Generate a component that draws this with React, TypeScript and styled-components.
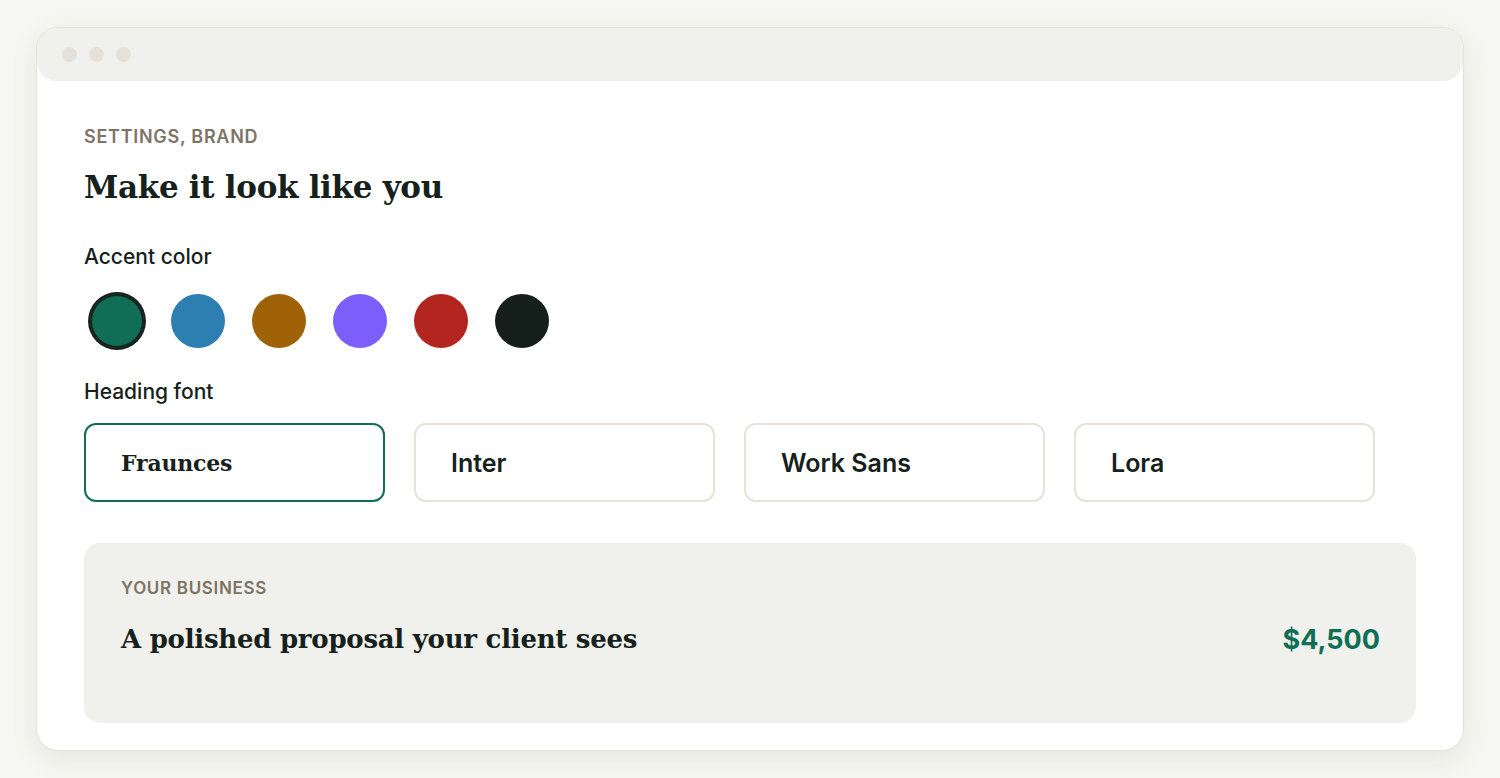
import React, { useState } from 'react';
import styled, { createGlobalStyle } from 'styled-components';

const GlobalStyle = createGlobalStyle`
    html, body {
        margin: 0;
        padding: 0;
        background: #f6f6f2;
        font-family: Inter, "Noto Sans", sans-serif;
        color: #16211c;
    }
`;

const Page = styled.div`
    padding: 27px 36px 27px;
`;

const Window = styled.div`
    background: #fff;
    border: 1px solid #e4e1d7;
    border-radius: 22px;
    box-shadow: 0 8px 28px rgba(60, 60, 40, .08);
    overflow: hidden;
`;

// title bar with the three window dots
const TitleBar = styled.div`
    height: 53px;
    background: #f0f1ec;
    border-radius: 0 0 20px 20px;
    display: flex;
    align-items: center;
    gap: 12px;
    padding-left: 25px;
`;

const Dot = styled.span`
    width: 15px;
    height: 15px;
    border-radius: 50%;
    background: #e6e1d8;
`;

const Content = styled.div`
    padding: 45px 47px 27px;
`;

const Eyebrow = styled.div<{ $size?: number }>`
    font-size: ${p => p.$size || 18}px;
    font-weight: 600;
    letter-spacing: .04em;
    color: #7d7466;
    text-transform: uppercase;
    line-height: 22px;
`;

const Heading = styled.h1`
    margin: 19px 0 0;
    font-family: "DejaVu Serif", "Liberation Serif", serif;
    font-weight: 700;
    font-size: 31px;
    line-height: 40px;
    letter-spacing: -.01em;
`;

const Label = styled.div`
    font-size: 21px;
    font-weight: 500;
    line-height: 24px;
    margin-top: 38px;
`;

const Swatches = styled.div`
    display: flex;
    gap: 27px;
    margin-top: 25px;
    padding-left: 6px;
`;

const Swatch = styled.button<{ $color: string, $selected: boolean }>`
    width: 54px;
    height: 54px;
    border-radius: 50%;
    border: none;
    padding: 0;
    background: ${p => p.$color};
    cursor: pointer;
    box-shadow: ${p => p.$selected ? '0 0 0 2px #16211c, inset 0 0 0 2px #16211c' : 'none'};
`;

const FontLabel = styled(Label)`
    margin-top: 32px;
`;

const FontGrid = styled.div`
    display: grid;
    grid-template-columns: repeat(4, 301px);
    gap: 29px;
    margin-top: 19px;
`;

const FontCard = styled.button<{ $selected: boolean, $serif?: boolean }>`
    height: 79px;
    border-radius: 12px;
    border: 2px solid ${p => p.$selected ? '#0f6e55' : '#e6e3d8'};
    background: #fff;
    text-align: left;
    padding: 0 0 0 35px;
    color: #16211c;
    cursor: pointer;
    font-family: ${p => p.$serif ? '"DejaVu Serif", "Liberation Serif", serif' : 'Inter, sans-serif'};
    font-weight: ${p => p.$serif ? 700 : 600};
    font-size: ${p => p.$serif ? 22 : 25}px;
    letter-spacing: ${p => p.$serif ? '-.01em' : '0'};
`;

const Preview = styled.div`
    margin-top: 41px;
    background: #f0f1ec;
    border-radius: 16px;
    height: 180px;
    box-sizing: border-box;
    padding: 34px 36px 0 37px;
`;

const PreviewRow = styled.div`
    display: flex;
    justify-content: space-between;
    align-items: center;
    margin-top: 22px;
`;

const PreviewTitle = styled.div`
    font-family: "DejaVu Serif", "Liberation Serif", serif;
    font-weight: 700;
    font-size: 26px;
    line-height: 36px;
    letter-spacing: -.01em;
`;

const Price = styled.div`
    font-size: 27px;
    font-weight: 700;
    color: #0f6e55;
`;

const colors = ['#0f6e55', '#2e7fb1', '#a06207', '#7c5ffa', '#b3261f', '#15201c'];
const fonts = ['Fraunces', 'Inter', 'Work Sans', 'Lora'];

export default function App() {
    const [color, setColor] = useState(0);
    const [font, setFont] = useState(0);
    return (
        <>
            <GlobalStyle />
            <Page>
                <Window>
                    <TitleBar>
                        <Dot /><Dot /><Dot />
                    </TitleBar>
                    <Content>
                        <Eyebrow>Settings, Brand</Eyebrow>
                        <Heading>Make it look like you</Heading>
                        <Label>Accent color</Label>
                        <Swatches>
                            {colors.map((c, i) => (
                                <Swatch key={c} $color={c} $selected={i === color} onClick={() => setColor(i)} />
                            ))}
                        </Swatches>
                        <FontLabel>Heading font</FontLabel>
                        <FontGrid>
                            {fonts.map((f, i) => (
                                <FontCard key={f} $serif={i === 0} $selected={i === font} onClick={() => setFont(i)}>
                                    {f}
                                </FontCard>
                            ))}
                        </FontGrid>
                        <Preview>
                            <Eyebrow $size={17}>Your business</Eyebrow>
                            <PreviewRow>
                                <PreviewTitle>A polished proposal your client sees</PreviewTitle>
                                <Price>$4,500</Price>
                            </PreviewRow>
                        </Preview>
                    </Content>
                </Window>
            </Page>
        </>
    );
}
